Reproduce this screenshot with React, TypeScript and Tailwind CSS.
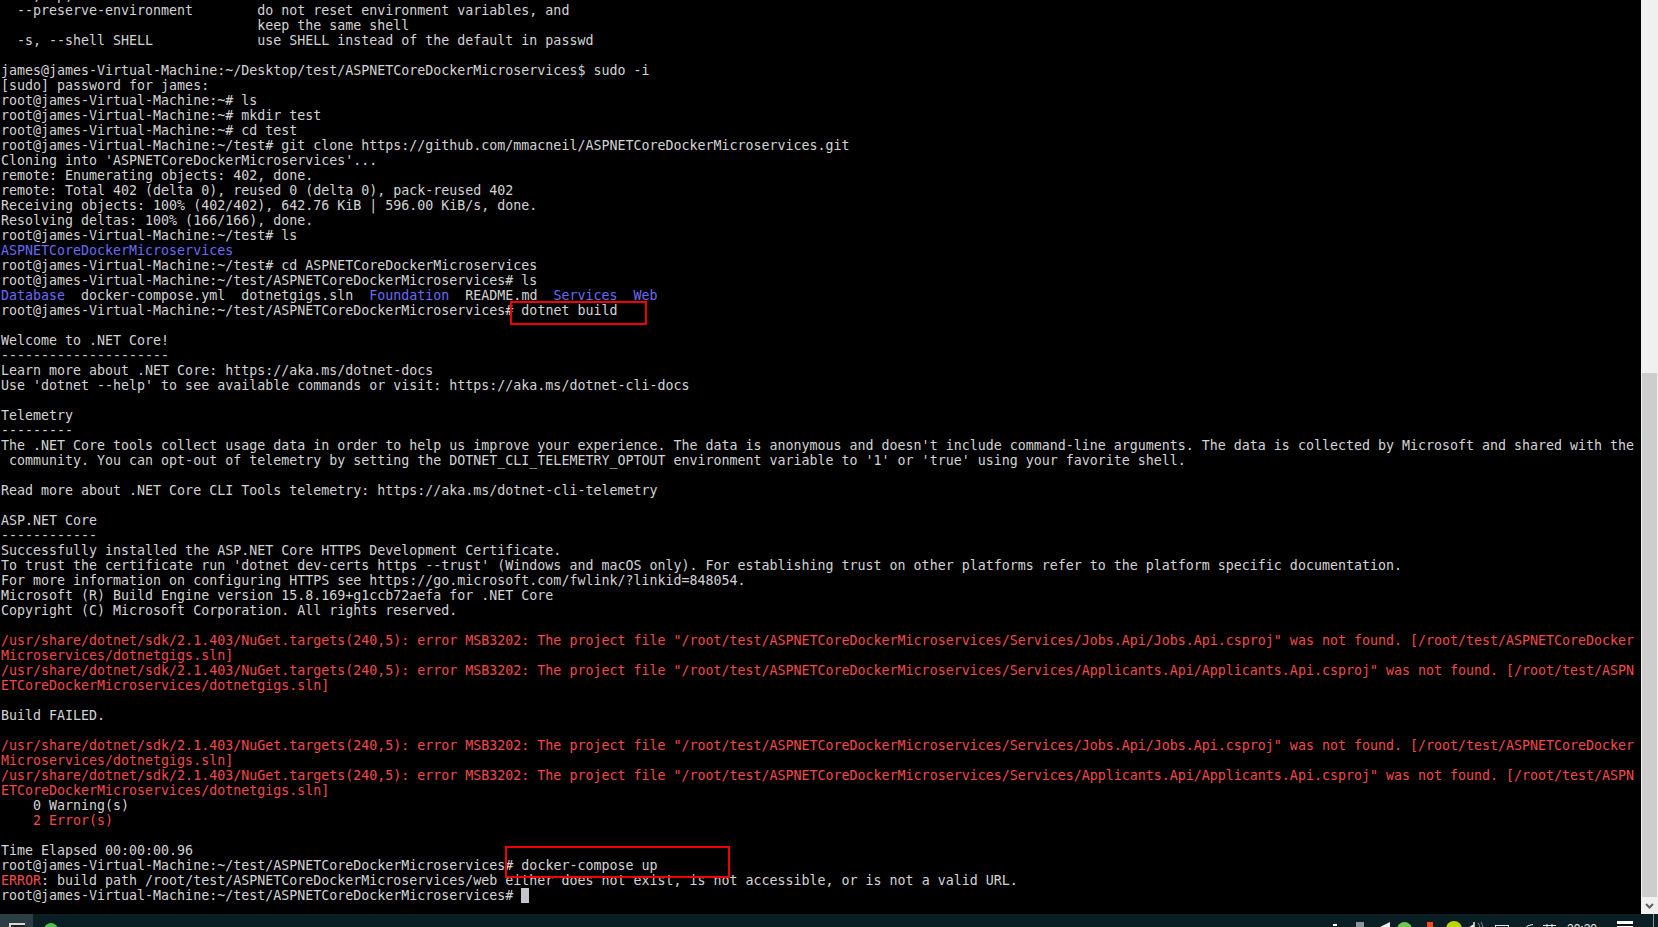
const prompt = "root@james-Virtual-Machine:~/test/ASPNETCoreDockerMicroservices#";

function Line({ children, tone }: { children?: React.ReactNode; tone?: "red" | "blue" }) {
  const color = tone === "red" ? "text-[#f24a4a]" : tone === "blue" ? "text-[#6a6af5]" : "";
  return <div className={`h-[15px] whitespace-pre ${color}`}>{children}</div>;
}

function Blue({ children }: { children: React.ReactNode }) {
  return <span className="text-[#6a6af5]">{children}</span>;
}

const err1a =
  '/usr/share/dotnet/sdk/2.1.403/NuGet.targets(240,5): error MSB3202: The project file "/root/test/ASPNETCoreDockerMicroservices/Services/Jobs.Api/Jobs.Api.csproj" was not found. [/root/test/ASPNETCoreDocker';
const err1b = "Microservices/dotnetgigs.sln]";
const err2a =
  '/usr/share/dotnet/sdk/2.1.403/NuGet.targets(240,5): error MSB3202: The project file "/root/test/ASPNETCoreDockerMicroservices/Services/Applicants.Api/Applicants.Api.csproj" was not found. [/root/test/ASPN';
const err2b = "ETCoreDockerMicroservices/dotnetgigs.sln]";

function Terminal() {
  return (
    <div className="relative h-full flex-1 overflow-hidden bg-black pl-[1px] font-['DejaVu_Sans_Mono',monospace] text-[13.3px] leading-[15px] text-[#d4d4d4]">
      <div className="-mt-[12px]">
        <Line>{"  -m, -p,"}</Line>
        <Line>{"  --preserve-environment        do not reset environment variables, and"}</Line>
        <Line>{"                                keep the same shell"}</Line>
        <Line>{"  -s, --shell SHELL             use SHELL instead of the default in passwd"}</Line>
        <Line />
        <Line>james@james-Virtual-Machine:~/Desktop/test/ASPNETCoreDockerMicroservices$ sudo -i</Line>
        <Line>[sudo] password for james:</Line>
        <Line>root@james-Virtual-Machine:~# ls</Line>
        <Line>root@james-Virtual-Machine:~# mkdir test</Line>
        <Line>root@james-Virtual-Machine:~# cd test</Line>
        <Line>root@james-Virtual-Machine:~/test# git clone https://github.com/mmacneil/ASPNETCoreDockerMicroservices.git</Line>
        <Line>Cloning into 'ASPNETCoreDockerMicroservices'...</Line>
        <Line>remote: Enumerating objects: 402, done.</Line>
        <Line>remote: Total 402 (delta 0), reused 0 (delta 0), pack-reused 402</Line>
        <Line>Receiving objects: 100% (402/402), 642.76 KiB | 596.00 KiB/s, done.</Line>
        <Line>Resolving deltas: 100% (166/166), done.</Line>
        <Line>root@james-Virtual-Machine:~/test# ls</Line>
        <Line tone="blue">ASPNETCoreDockerMicroservices</Line>
        <Line>root@james-Virtual-Machine:~/test# cd ASPNETCoreDockerMicroservices</Line>
        <Line>{prompt} ls</Line>
        <Line>
          <Blue>Database</Blue>
          {"  docker-compose.yml  dotnetgigs.sln  "}
          <Blue>Foundation</Blue>
          {"  README.md  "}
          <Blue>Services</Blue>
          {"  "}
          <Blue>Web</Blue>
        </Line>
        <Line>{prompt} dotnet build</Line>
        <Line />
        <Line>Welcome to .NET Core!</Line>
        <Line>---------------------</Line>
        <Line>Learn more about .NET Core: https://aka.ms/dotnet-docs</Line>
        <Line>Use 'dotnet --help' to see available commands or visit: https://aka.ms/dotnet-cli-docs</Line>
        <Line />
        <Line>Telemetry</Line>
        <Line>---------</Line>
        <Line>The .NET Core tools collect usage data in order to help us improve your experience. The data is anonymous and doesn't include command-line arguments. The data is collected by Microsoft and shared with the</Line>
        <Line>{" community. You can opt-out of telemetry by setting the DOTNET_CLI_TELEMETRY_OPTOUT environment variable to '1' or 'true' using your favorite shell."}</Line>
        <Line />
        <Line>Read more about .NET Core CLI Tools telemetry: https://aka.ms/dotnet-cli-telemetry</Line>
        <Line />
        <Line>ASP.NET Core</Line>
        <Line>------------</Line>
        <Line>Successfully installed the ASP.NET Core HTTPS Development Certificate.</Line>
        <Line>To trust the certificate run 'dotnet dev-certs https --trust' (Windows and macOS only). For establishing trust on other platforms refer to the platform specific documentation.</Line>
        <Line>For more information on configuring HTTPS see https://go.microsoft.com/fwlink/?linkid=848054.</Line>
        <Line>Microsoft (R) Build Engine version 15.8.169+g1ccb72aefa for .NET Core</Line>
        <Line>Copyright (C) Microsoft Corporation. All rights reserved.</Line>
        <Line />
        <Line tone="red">{err1a}</Line>
        <Line tone="red">{err1b}</Line>
        <Line tone="red">{err2a}</Line>
        <Line tone="red">{err2b}</Line>
        <Line />
        <Line>Build FAILED.</Line>
        <Line />
        <Line tone="red">{err1a}</Line>
        <Line tone="red">{err1b}</Line>
        <Line tone="red">{err2a}</Line>
        <Line tone="red">{err2b}</Line>
        <Line>{"    0 Warning(s)"}</Line>
        <Line tone="red">{"    2 Error(s)"}</Line>
        <Line />
        <Line>Time Elapsed 00:00:00.96</Line>
        <Line>{prompt} docker-compose up</Line>
        <Line>
          <span className="text-[#f24a4a]">ERROR</span>: build path /root/test/ASPNETCoreDockerMicroservices/web either does not exist, is not accessible, or is not a valid URL.
        </Line>
        <Line>
          {prompt}{" "}
          <span className="inline-block h-[15px] w-[8px] bg-[#c4c4cc] align-top" />
        </Line>
      </div>
      {/* hand drawn annotation boxes */}
      <div className="absolute left-[510px] top-[301px] h-[24px] w-[137px] border-2 border-[#f00000]" />
      <div className="absolute left-[505px] top-[846px] h-[32px] w-[225px] border-2 border-[#f00000]" />
    </div>
  );
}

function Scrollbar() {
  return (
    <div className="flex h-full w-[17px] flex-col bg-[#f0f0f0]">
      <div className="flex-1" />
      <div className="ml-[1px] h-[524px] w-[15px] bg-[#cdcdcd]" />
      <div className="flex h-[17px] items-center justify-center">
        <svg width="9" height="6" viewBox="0 0 9 6" fill="none" stroke="#606060" strokeWidth="2">
          <path d="M1 1l3.5 3.5L8 1" />
        </svg>
      </div>
    </div>
  );
}

function Taskbar() {
  return (
    <div className="flex h-[13px] shrink-0 overflow-hidden bg-[#0a1f24] font-['Liberation_Sans',sans-serif]">
      <div className="flex h-full w-[33px] justify-center bg-[#2c3e44] pt-[9px]">
        <div className="h-[8px] w-[16px] border-t-2 border-l-2 border-[#d8d8d8] bg-[#222]" />
      </div>
      <div className="ml-[11px] mt-[9px] h-[14px] w-[14px] rounded-full bg-[#4fc04f]" />
      <div className="flex-1" />
      <div className="relative h-full w-[325px]">
        <div className="absolute left-0 top-[10px] h-[2px] w-[4px] bg-white" />
        <div className="absolute left-[23px] top-[8px] h-[6px] w-[8px] bg-[#8a9599]" />
        <svg className="absolute left-[45px] top-[8px]" width="12" height="6" viewBox="0 0 12 6">
          <path d="M12 0L0 6h12z" fill="#f0f0f0" />
        </svg>
        <div className="absolute left-[64px] top-[8px] h-[15px] w-[15px] rounded-full bg-[#6fc94f]" />
        <div className="absolute left-[94px] top-[7px] h-[6px] w-[6px] border-t border-[#301010] bg-[#f04a20]" />
        <div className="absolute left-[113px] top-[7px] h-[16px] w-[16px] rounded-full bg-[#b8d800]" />
        <svg className="absolute left-[136px] top-[8px]" width="16" height="6" viewBox="0 0 16 6" fill="none">
          <path d="M0 6l5-3V0v6" stroke="#e8e8e8" strokeWidth="1.5" />
          <path d="M9 1q2 2 2 5M12 0q2 3 2 6" stroke="#7d8a8d" />
        </svg>
        <div className="absolute left-[162px] top-[11px] h-[6px] w-[14px] border border-[#e8e8e8]" />
        <svg className="absolute left-[191px] top-[10px]" width="10" height="4" viewBox="0 0 10 4" fill="none">
          <path d="M9 0.5Q3 1 1 4" stroke="#e8e8e8" />
        </svg>
        <svg className="absolute left-[210px] top-[10px]" width="13" height="4" viewBox="0 0 13 4" fill="none" stroke="#e8e8e8">
          <path d="M0 1.5h13M4 0v3M9 0v3M0 3.5h13" />
        </svg>
        <span className="absolute left-[234px] top-[8px] text-[12px] leading-[15px] text-[#f0f0f0]">20:20</span>
        <div className="absolute left-[284px] top-[7px] h-[8px] w-[16px] border-t-[3px] border-b-[3px] border-white bg-[#111]" />
        <div className="absolute left-[320px] top-0 h-full w-[1px] bg-[#8a9599]" />
      </div>
    </div>
  );
}

export default function App() {
  return (
    <div className="flex h-screen w-screen flex-col overflow-hidden bg-black">
      <div className="flex min-h-0 flex-1">
        <Terminal />
        <Scrollbar />
      </div>
      <Taskbar />
    </div>
  );
}
